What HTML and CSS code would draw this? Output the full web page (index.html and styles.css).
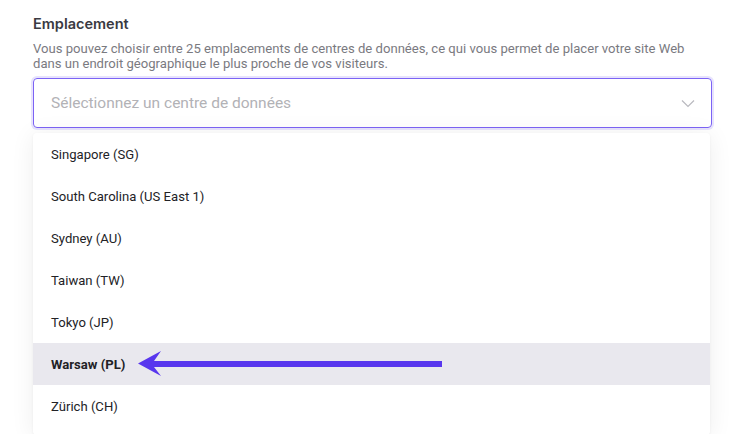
FILE: index.html
```html
<!DOCTYPE html>
<html lang="fr">
<head>
<meta charset="utf-8">
<link rel="stylesheet" href="styles.css">
</head>
<body>
<div class="field">
  <h2 class="label">Emplacement</h2>
  <p class="help">Vous pouvez choisir entre 25 emplacements de centres de données, ce qui vous permet de placer votre site Web dans un endroit géographique le plus proche de vos visiteurs.</p>
  <div class="select">
    <span class="placeholder">Sélectionnez un centre de données</span>
    <svg class="chevron" width="14" height="9" viewBox="0 0 14 9"><path d="M1 1.5 L7 7.5 L13 1.5" fill="none" stroke="#b9b9bf" stroke-width="1.2"/></svg>
  </div>
  <ul class="menu">
    <li class="option">Singapore (SG)</li>
    <li class="option">South Carolina (US East 1)</li>
    <li class="option">Sydney (AU)</li>
    <li class="option">Taiwan (TW)</li>
    <li class="option">Tokyo (JP)</li>
    <li class="option active">Warsaw (PL)
      <svg class="arrow" width="306" height="28" viewBox="0 0 306 28"><path d="M0 13.5 L23 1 L16 11 L304 11 L304 17 L16 17 L23 26 Z" fill="#5836ee"/></svg>
    </li>
    <li class="option">Zürich (CH)</li>
  </ul>
</div>
</body>
</html>
```
FILE: styles.css
```css
html, body {
  margin: 0;
  padding: 0;
  background: #fff;
}
body {
  font-family: Roboto, "Liberation Sans", sans-serif;
  overflow: hidden;
  height: 434px;
}
.field {
  width: 677px;
  padding: 15px 0 0 33px;
}
.label {
  margin: 0;
  font-family: Inter, Roboto, sans-serif;
  font-size: 14.5px;
  font-weight: 600;
  line-height: 18px;
  color: #3a3a42;
}
.help {
  margin: 8px 0 0;
  max-width: 665px;
  font-size: 13.1px;
  line-height: 15px;
  color: #7a7a7f;
}
.select {
  margin-top: 7px;
  height: 48px;
  border: 1.5px solid #7c63f5;
  border-radius: 4px;
  box-shadow: 0 0 0 2px rgba(124, 99, 245, 0.18);
  display: flex;
  align-items: center;
  justify-content: space-between;
  padding: 0 16px 0 17px;
  box-sizing: content-box;
  width: 644px;
}
.placeholder {
  font-size: 15.5px;
  color: #b2b2b6;
}
.chevron {
  display: block;
}
.menu {
  list-style: none;
  margin: 5px 0 0;
  padding: 0;
  width: 677px;
  background: #fff;
  border-radius: 4px;
  box-shadow: 0 2px 24px rgba(0, 0, 0, 0.07), 0 1px 3px rgba(0, 0, 0, 0.05);
  padding-bottom: 8px;
}
.option {
  height: 42px;
  display: flex;
  align-items: center;
  padding-left: 18px;
  font-size: 13.1px;
  color: #222226;
  position: relative;
}
.option.active {
  background: #e9e8ee;
  font-weight: 700;
}
.arrow {
  position: absolute;
  left: 105px;
  top: 7px;
}
```
